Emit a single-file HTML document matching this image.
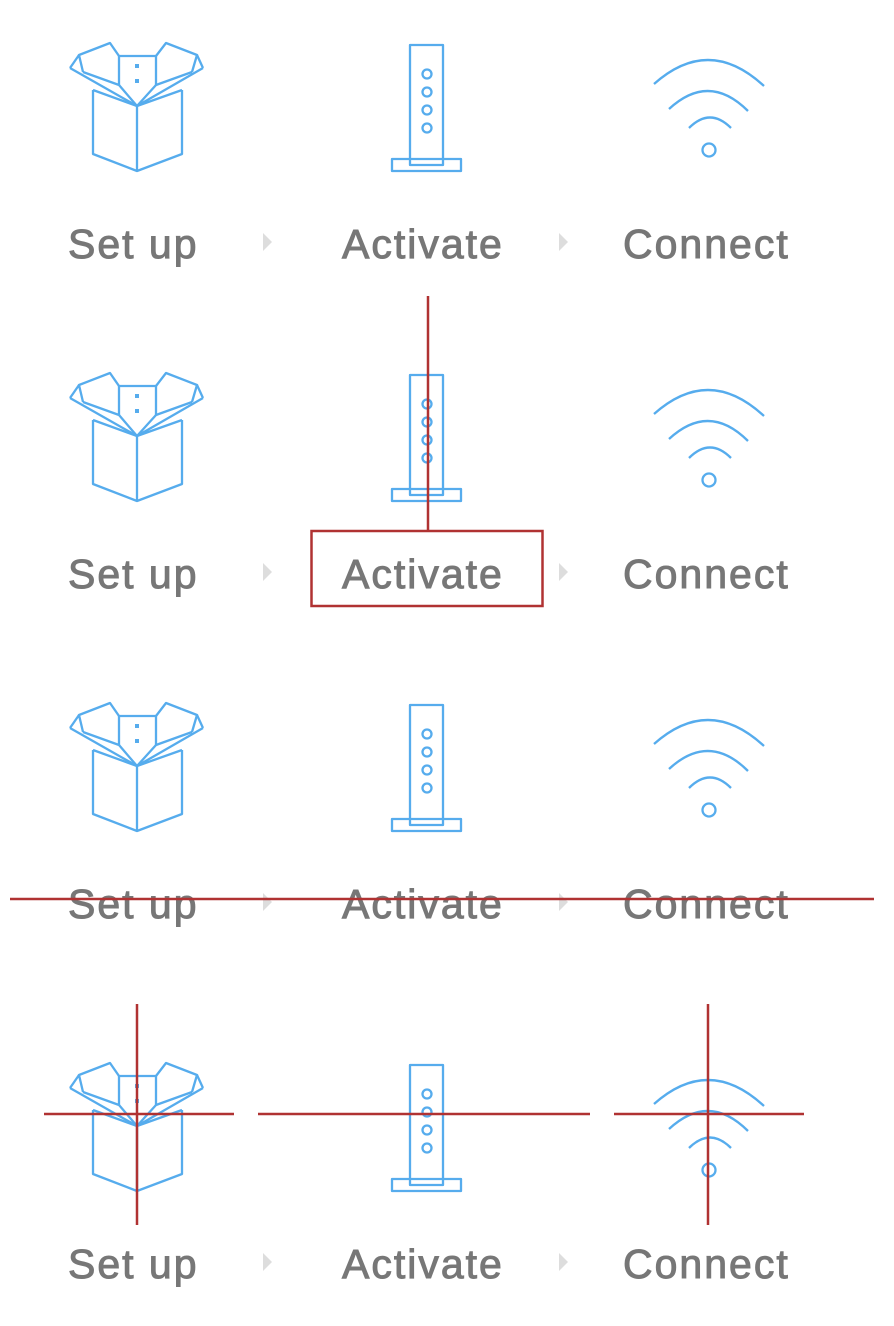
<!DOCTYPE html>
<html><head><style>
html,body{margin:0;padding:0;background:#fff;width:894px;height:1326px;overflow:hidden;position:relative}
.t{position:absolute;font-family:"Liberation Sans",sans-serif;font-size:41px;letter-spacing:2px;color:#777;line-height:1;white-space:nowrap;-webkit-text-stroke:1px #777}
svg{position:absolute;left:0;top:0}
</style></head><body>
<svg width="894" height="1326" viewBox="0 0 894 1326">
<defs>
<g id="row" fill="none" stroke="#56aced" stroke-width="2.3" stroke-linejoin="round">
 <path d="M93 90 L93 154 L137 171 L182 154 L182 90"/>
 <path d="M137 106 L137 171"/>
 <path d="M70 68 L137 106 L203 68"/>
 <path d="M93 90 L137 106 L182 90"/>
 <path d="M119 85 L119 56 L156 56 L156 85"/>
 <path d="M119 85 L137 106 L156 85"/>
 <path d="M83 72 L119 85"/>
 <path d="M192 72 L156 85"/>
 <path d="M119 56 L110 43 L79 55 L83 72"/>
 <path d="M156 56 L166 43 L197 55 L192 72"/>
 <path d="M79 55 L70 68"/>
 <path d="M197 55 L203 68"/>
 <rect x="135" y="64" width="4" height="4" fill="#56aced" stroke="none"/>
 <rect x="135" y="79" width="4" height="4" fill="#56aced" stroke="none"/>
 <rect x="410" y="45" width="33" height="120"/>
 <rect x="392" y="159" width="69" height="12"/>
 <circle cx="427" cy="74" r="4.5"/><circle cx="427" cy="92" r="4.5"/><circle cx="427" cy="110" r="4.5"/><circle cx="427" cy="128" r="4.5"/>
 <path d="M654 84 Q709 35 764 86"/>
 <path d="M669 109 Q709 72 748 111"/>
 <path d="M689 128 Q710 107 731 128"/>
 <circle cx="709" cy="150" r="6.5"/>
 <path d="M263 233 L272 242 L263 251 Z" fill="#ddd" stroke="none"/>
 <path d="M559 233 L568 242 L559 251 Z" fill="#ddd" stroke="none"/>
</g>
</defs>
<use href="#row"/>
<use href="#row" y="330"/>
<use href="#row" y="660"/>
<use href="#row" y="1020"/>
</svg>
<div class="t" style="left:68px;top:224px">Set up</div>
<div class="t" style="left:342px;top:224px">Activate</div>
<div class="t" style="left:623px;top:224px">Connect</div>
<div class="t" style="left:68px;top:554px">Set up</div>
<div class="t" style="left:342px;top:554px">Activate</div>
<div class="t" style="left:623px;top:554px">Connect</div>
<div class="t" style="left:68px;top:884px">Set up</div>
<div class="t" style="left:342px;top:884px">Activate</div>
<div class="t" style="left:623px;top:884px">Connect</div>
<div class="t" style="left:68px;top:1244px">Set up</div>
<div class="t" style="left:342px;top:1244px">Activate</div>
<div class="t" style="left:623px;top:1244px">Connect</div>
<svg width="894" height="1326" viewBox="0 0 894 1326" style="z-index:2">
<g stroke="#b03232" stroke-width="2.5" fill="none">
 <line x1="428" y1="296" x2="428" y2="531"/>
 <rect x="311.5" y="531" width="231" height="75"/>
 <line x1="10" y1="899" x2="874" y2="899"/>
 <line x1="137" y1="1004" x2="137" y2="1225"/>
 <line x1="44" y1="1114" x2="234" y2="1114"/>
 <line x1="258" y1="1114" x2="590" y2="1114"/>
 <line x1="708" y1="1004" x2="708" y2="1225"/>
 <line x1="614" y1="1114" x2="804" y2="1114"/>
</g>
</svg>
</body></html>
